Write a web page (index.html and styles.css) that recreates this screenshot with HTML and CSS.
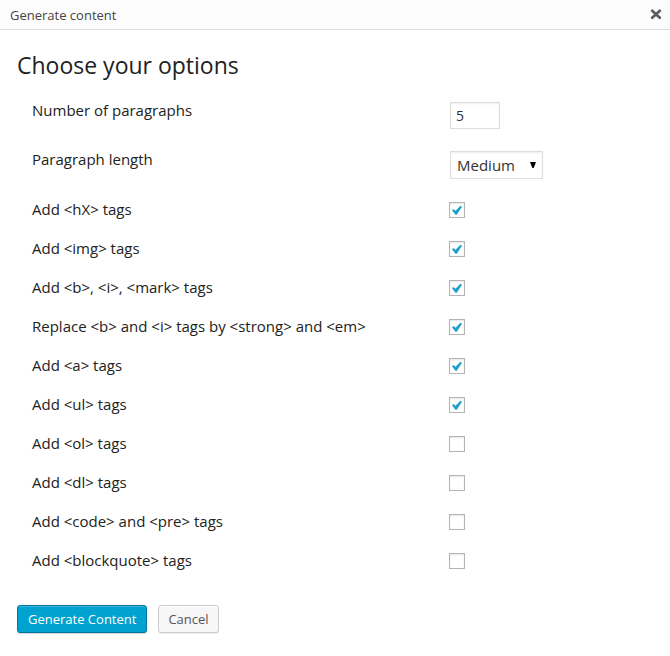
FILE: index.html
```html
<!DOCTYPE html>
<html lang="en">
<head>
<meta charset="utf-8">
<meta name="viewport" content="width=device-width, initial-scale=1">
<title>Generate content</title>
<link rel="stylesheet" href="styles.css">
</head>
<body>
<header class="titlebar">
  <span class="titlebar-text">Generate content</span>
  <button class="close" type="button" aria-label="Close">
    <svg viewBox="0 0 12 12" width="12" height="12" aria-hidden="true"><path d="M2.2 1.7 9.8 8.7M9.8 1.7 2.2 8.7" stroke="#5c5c5c" stroke-width="2.7" stroke-linecap="round"/></svg>
  </button>
</header>
<main class="content">
  <h1 class="heading">Choose your options</h1>
  <form>
    <div class="options">
      <div class="row row-field">
        <label for="count">Number of paragraphs</label>
        <input class="field" id="count" type="text" inputmode="numeric" value="5">
      </div>
      <div class="row row-field">
        <label for="length">Paragraph length</label>
        <div class="select">
          <select class="field field-select" id="length">
            <option>Short</option>
            <option selected>Medium</option>
            <option>Long</option>
          </select>
          <svg class="arrow" viewBox="0 0 6 6" width="6" height="6" aria-hidden="true"><path d="M0 0h6L3.6 6H2.4z"/></svg>
        </div>
      </div>
      <div class="row"><label for="hx">Add &lt;hX&gt; tags</label><input class="check" id="hx" type="checkbox" checked></div>
      <div class="row"><label for="img">Add &lt;img&gt; tags</label><input class="check" id="img" type="checkbox" checked></div>
      <div class="row"><label for="inline">Add &lt;b&gt;, &lt;i&gt;, &lt;mark&gt; tags</label><input class="check" id="inline" type="checkbox" checked></div>
      <div class="row"><label for="replace">Replace &lt;b&gt; and &lt;i&gt; tags by &lt;strong&gt; and &lt;em&gt;</label><input class="check" id="replace" type="checkbox" checked></div>
      <div class="row"><label for="a">Add &lt;a&gt; tags</label><input class="check" id="a" type="checkbox" checked></div>
      <div class="row"><label for="ul">Add &lt;ul&gt; tags</label><input class="check" id="ul" type="checkbox" checked></div>
      <div class="row"><label for="ol">Add &lt;ol&gt; tags</label><input class="check" id="ol" type="checkbox"></div>
      <div class="row"><label for="dl">Add &lt;dl&gt; tags</label><input class="check" id="dl" type="checkbox"></div>
      <div class="row"><label for="code">Add &lt;code&gt; and &lt;pre&gt; tags</label><input class="check" id="code" type="checkbox"></div>
      <div class="row"><label for="quote">Add &lt;blockquote&gt; tags</label><input class="check" id="quote" type="checkbox"></div>
    </div>
    <div class="actions">
      <button class="button button-primary" type="submit">Generate Content</button>
      <button class="button" type="button">Cancel</button>
    </div>
  </form>
</main>
</body>
</html>
```
FILE: styles.css
```css
* {
  box-sizing: border-box;
}

body {
  margin: 0;
  background: #fff;
  color: #222;
  font: 15px/18px "Open Sans", "Noto Sans", sans-serif;
}

.titlebar {
  display: flex;
  align-items: center;
  justify-content: space-between;
  height: 30px;
  padding: 0 8px 0 10px;
  background: #fcfcfc;
  border-bottom: 1px solid #ddd;
  color: #444;
  font-size: 13px;
}

.close {
  display: flex;
  padding: 0;
  border: 0;
  background: none;
}

.content {
  padding: 20px 17px;
}

.heading {
  margin: 0 0 12px;
  color: #222;
  font-size: 23px;
  font-weight: 400;
  line-height: 30px;
}

.options {
  padding-left: 15px;
}

.row {
  display: grid;
  grid-template-columns: 2fr 1fr;
  column-gap: 9px;
  align-items: start;
  height: 39px;
  padding-top: 10px;
}

.row-field {
  height: 49px;
  padding-top: 9px;
}

.field {
  width: 50px;
  height: 27px;
  margin: 1px;
  padding: 0 5px;
  border: 1px solid #ddd;
  border-radius: 0;
  background: #fff;
  box-shadow: inset 0 1px 2px rgba(0, 0, 0, 0.07);
  color: #333;
  font: 14px/20px "Open Sans", "Noto Sans", sans-serif;
}

.select {
  display: grid;
  position: relative;
  width: 95px;
}

.field-select {
  width: auto;
  height: 28px;
  padding: 0 6px;
  appearance: none;
  font-size: 15px;
}

.arrow {
  position: absolute;
  top: 12px;
  right: 8px;
  fill: #000;
  pointer-events: none;
}

.check {
  display: grid;
  place-items: center;
  width: 16px;
  height: 16px;
  margin: 2px 0 0;
  appearance: none;
  border: 1px solid #b4b4b4;
  background: #fff;
  box-shadow: inset 0 1px 2px rgba(0, 0, 0, 0.1);
}

.check:checked::before {
  content: "";
  width: 10px;
  height: 10px;
  background: #1e9fcc;
  clip-path: polygon(0 52%, 14% 40%, 36% 58%, 84% 8%, 100% 18%, 48% 98%, 34% 98%);
}

.actions {
  display: flex;
  gap: 11px;
  padding-top: 25px;
}

.button {
  height: 28px;
  padding: 0 9px;
  border: 1px solid #ccc;
  border-radius: 3px;
  background: #f7f7f7;
  box-shadow: inset 0 1px 0 #fff, 0 1px 0 rgba(0, 0, 0, 0.08);
  color: #555;
  font: 13px/26px "Open Sans", "Noto Sans", sans-serif;
}

.button-primary {
  padding: 0 10px;
  border-color: #0074a2;
  background: #00a2cf;
  box-shadow: inset 0 1px 0 rgba(120, 200, 230, 0.5), 0 1px 0 rgba(0, 0, 0, 0.15);
  color: #fff;
}
```
